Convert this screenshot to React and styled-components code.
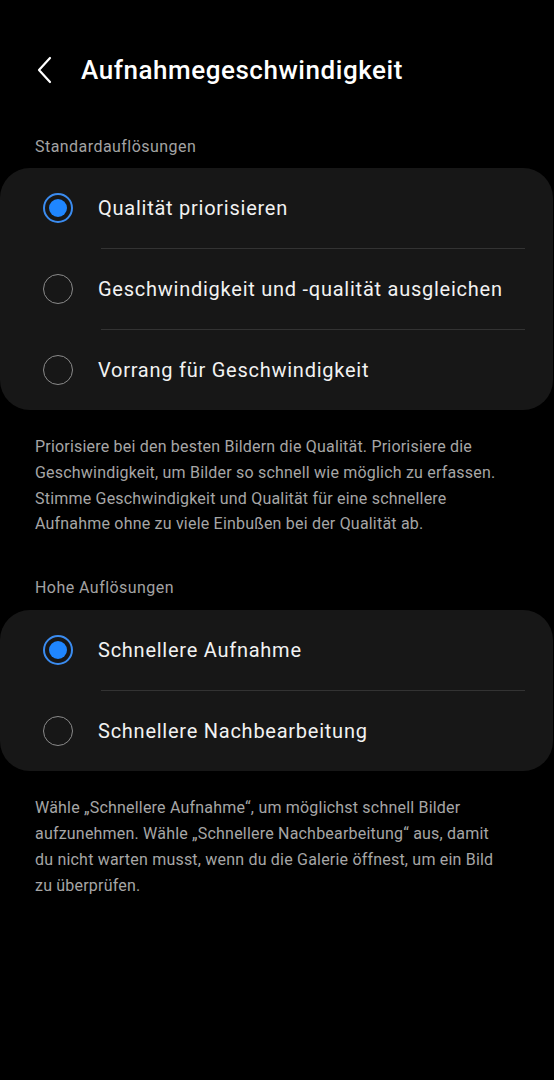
import React from "react";
import styled, { createGlobalStyle } from "styled-components";

const GlobalStyle = createGlobalStyle`
    html, body {
        margin: 0;
        padding: 0;
        background: #000;
    }
    body {
        font-family: Roboto, "Noto Sans", sans-serif;
        -webkit-font-smoothing: antialiased;
    }
`;

const Page = styled.div`
    width: 554px;
    min-height: 1080px;
    background: #000;
    color: #fff;
`;

const Header = styled.header`
    display: flex;
    align-items: center;
    height: 40px;
    padding: 50px 0 0 33px;
    gap: 24px;
`;

const BackButton = styled.button`
    display: flex;
    align-items: center;
    justify-content: center;
    width: 24px;
    height: 30px;
    padding: 0;
    border: none;
    background: none;
    color: #fff;
`;

const Title = styled.h1`
    margin: 0;
    font-size: 26px;
    font-weight: 500;
    letter-spacing: 0.55px;
    color: #fff;
`;

const SectionLabel = styled.div`
    padding: 0 35px;
    font-size: 16px;
    line-height: 20px;
    letter-spacing: 0.45px;
    color: #a3a3a3;
    margin-top: ${(p) => p.$top}px;
    margin-bottom: ${(p) => p.$bottom}px;
`;

const Card = styled.div`
    background: #171717;
    border-radius: 30px;
    margin: 0 1px 0 0;
`;

const Row = styled.label`
    display: flex;
    align-items: center;
    height: 80px;
    padding-left: 43px;
    gap: 25px;
    cursor: pointer;
`;

const Divider = styled.div`
    height: 1px;
    margin: 0 28px 0 101px;
    background: #333;
`;

const Radio = styled.span`
    box-sizing: border-box;
    flex: none;
    width: 30px;
    height: 30px;
    border-radius: 50%;
    border: ${(p) => (p.$checked ? "2px solid #3b8cf0" : "1.5px solid #8a8a8a")};
    display: flex;
    align-items: center;
    justify-content: center;

    &::after {
        content: "";
        display: ${(p) => (p.$checked ? "block" : "none")};
        width: 18px;
        height: 18px;
        border-radius: 50%;
        background: #1f86ff;
    }
`;

const ItemText = styled.span`
    font-size: 20px;
    color: #f2f2f2;
    letter-spacing: 0.75px;
`;

const Description = styled.p`
    margin: 24px 0 0;
    padding: 0 54px 0 35px;
    font-size: 16px;
    line-height: 25.8px;
    letter-spacing: 0.2px;
    color: #a6a6a6;
`;

function BackIcon() {
    return (
        <svg width="18" height="28" viewBox="0 0 18 28" fill="none">
            <path d="M14 2 L3 14 L14 26" stroke="#fff" strokeWidth="2.2" strokeLinecap="round" strokeLinejoin="round" />
        </svg>
    );
}

function OptionGroup({ options, selected }) {
    return (
        <Card>
            {options.map((opt, i) => (
                <React.Fragment key={opt}>
                    {i > 0 && <Divider />}
                    <Row>
                        <Radio $checked={i === selected} />
                        <ItemText>{opt}</ItemText>
                    </Row>
                </React.Fragment>
            ))}
        </Card>
    );
}

export default function App() {
    return (
        <Page>
            <GlobalStyle />
            <Header>
                <BackButton aria-label="Zurück">
                    <BackIcon />
                </BackButton>
                <Title>Aufnahmegeschwindigkeit</Title>
            </Header>

            <SectionLabel $top={47} $bottom={11}>Standardauflösungen</SectionLabel>
            <OptionGroup
                selected={0}
                options={[
                    "Qualität priorisieren",
                    "Geschwindigkeit und -qualität ausgleichen",
                    "Vorrang für Geschwindigkeit",
                ]}
            />
            <Description>
                Priorisiere bei den besten Bildern die Qualität. Priorisiere die
                Geschwindigkeit, um Bilder so schnell wie möglich zu erfassen.
                Stimme Geschwindigkeit und Qualität für eine schnellere Aufnahme
                ohne zu viele Einbußen bei der Qualität ab.
            </Description>

            <SectionLabel $top={41} $bottom={12}>Hohe Auflösungen</SectionLabel>
            <OptionGroup
                selected={0}
                options={["Schnellere Aufnahme", "Schnellere Nachbearbeitung"]}
            />
            <Description>
                Wähle „Schnellere Aufnahme“, um möglichst schnell Bilder
                aufzunehmen. Wähle „Schnellere Nachbearbeitung“ aus, damit du
                nicht warten musst, wenn du die Galerie öffnest, um ein Bild zu
                überprüfen.
            </Description>
        </Page>
    );
}
